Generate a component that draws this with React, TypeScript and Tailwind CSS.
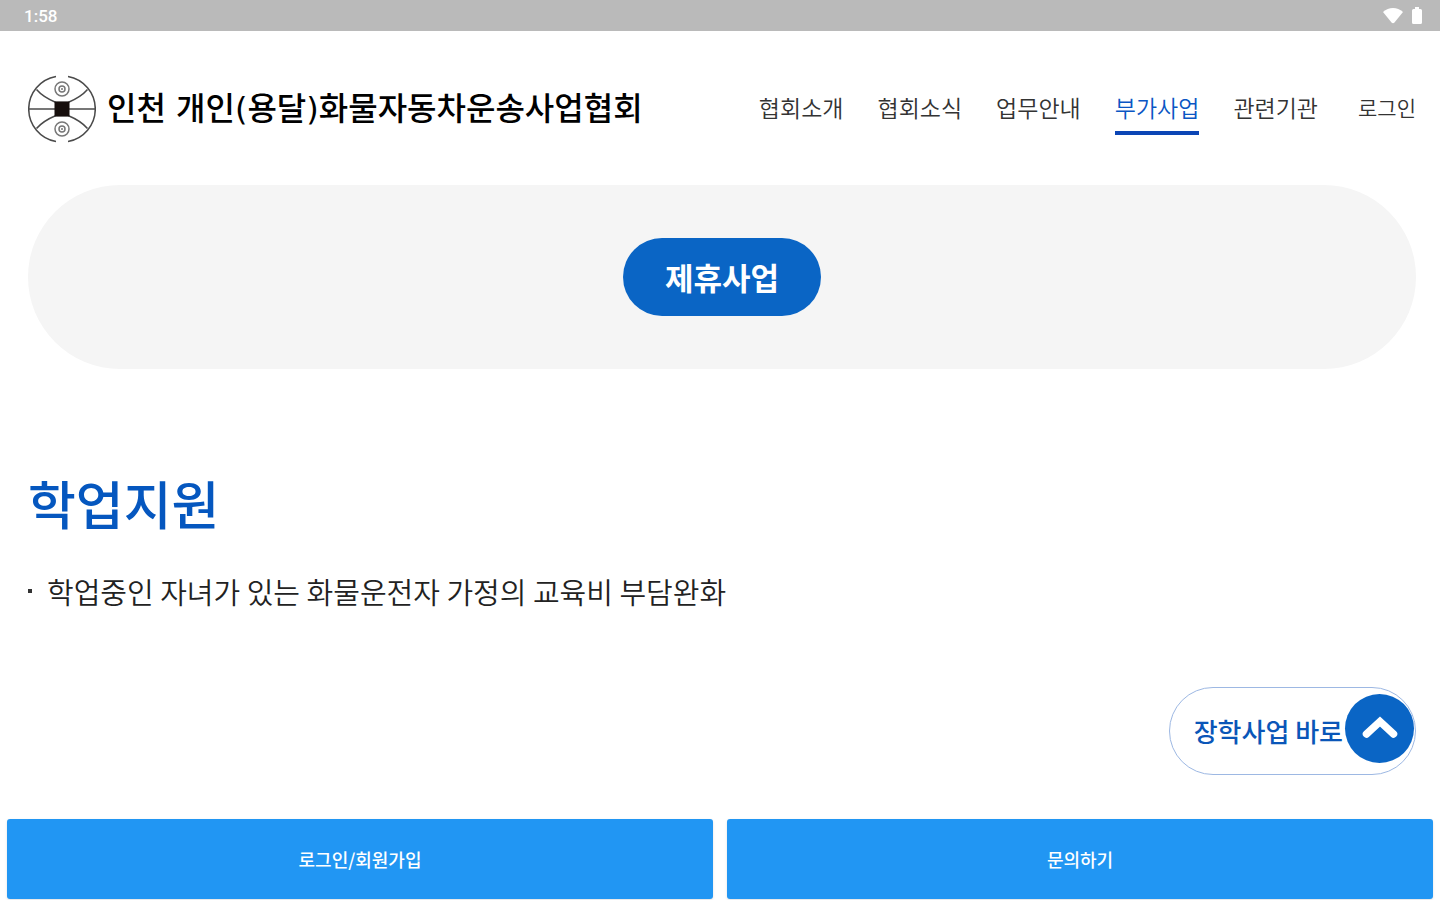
import React from "react";

const menu = [
  { label: "협회소개", active: false },
  { label: "협회소식", active: false },
  { label: "업무안내", active: false },
  { label: "부가사업", active: true },
  { label: "관련기관", active: false },
];

function StatusBar() {
  return (
    <div className="flex h-[31px] items-center justify-between bg-[#bababa] pl-6 pr-[18px] text-white">
      <span className="pt-px font-[Roboto,sans-serif] text-[17px] leading-5 font-medium">1:58</span>
      <div className="flex items-center gap-[9px]">
        <svg width="20" height="18" viewBox="0 0 20 18" fill="currentColor" aria-hidden="true">
          <path d="M0 5C3 2.500 6.300 1 10 1S17 2.500 20 5L11.500 15.500Q10 17 8.500 15.500Z" />
        </svg>
        <svg width="10" height="18" viewBox="0 0 10 18" fill="currentColor" aria-hidden="true">
          <path d="M3 0H7V2H8.500Q10 2 10 3.500V15.500Q10 17 8.500 17H1.500Q0 17 0 15.500V3.500Q0 2 1.500 2H3Z" />
        </svg>
      </div>
    </div>
  );
}

function Emblem() {
  return (
    <svg width="68" height="68" viewBox="0 0 68 68" fill="none" stroke="#4a4a4a" strokeWidth="1.5" aria-hidden="true">
      <path d="M28 1.500A33 33 0 0 0 28 66.500M40 1.500A33 33 0 0 1 40 66.500" />
      <path d="M1 34H67" />
      <path d="M8.500 14.500C15 22 22 25 28 27.500H40C46 25 53 22 59.500 14.500" />
      <path d="M8.500 53.500C15 46 22 43 28 40.500H40C46 43 53 46 59.500 53.500" />
      <g stroke="#777777">
        <circle cx="34" cy="14" r="7" />
        <circle cx="34" cy="14" r="3" />
        <circle cx="34" cy="54" r="7" />
        <circle cx="34" cy="54" r="3" />
      </g>
      <g fill="#777777" stroke="none">
        <circle cx="34" cy="14" r="1" />
        <circle cx="34" cy="54" r="1" />
      </g>
      <rect x="26.500" y="26.500" width="15" height="15" fill="#170f0d" stroke="none" />
    </svg>
  );
}

function Header() {
  return (
    <header className="flex items-center justify-between pt-11 pr-6 pl-7">
      <a href="#home" className="flex items-center gap-[11px]">
        <Emblem />
        <span className="font-['DejaVu_Sans','Noto_Sans_CJK_KR',sans-serif] text-[32px] leading-10 font-medium whitespace-nowrap text-black">
          인천 개인(용달)화물자동차운송사업협회
        </span>
      </a>
      <nav className="flex items-center gap-[34px] whitespace-nowrap">
        {menu.map((item) => (
          <a
            key={item.label}
            href="#menu"
            aria-current={item.active ? "page" : undefined}
            className={
              item.active
                ? "border-y-4 border-t-transparent border-b-[#0b45b5] pt-1 pb-2 text-[23px] leading-8 font-[350] text-[#0a56c4]"
                : "border-y-4 border-transparent pt-1 pb-2 text-[23px] leading-8 font-[350] text-[#333333]"
            }
          >
            {item.label}
          </a>
        ))}
        <a href="#login" className="pb-1 pl-[6px] text-[21px] leading-8 font-[350] text-[#333333]">
          로그인
        </a>
      </nav>
    </header>
  );
}

export default function App() {
  return (
    <div className="flex min-h-screen flex-col bg-white font-['Noto_Sans_CJK_KR',sans-serif]">
      <StatusBar />
      <Header />
      <main className="flex flex-col pt-[42px] pr-6 pl-7">
        <div className="flex justify-center rounded-full bg-[#f5f5f5] py-[53px]">
          <a
            href="#partners"
            className="rounded-full bg-[#0a65c5] px-[42px] py-4 text-[31px] leading-[46px] font-bold text-white"
          >
            제휴사업
          </a>
        </div>
        <h1 className="pt-24 text-[52px] leading-[76px] font-medium text-[#0557bf]">학업지원</h1>
        <ul className="pt-[30px]">
          <li className="flex items-center gap-[15px] text-[29px] leading-10 font-[350] text-[#222222]">
            <span className="size-1 bg-[#333333]" />
            학업중인 자녀가 있는 화물운전자 가정의 교육비 부담완화
          </li>
        </ul>
        <div className="relative mt-[76px] self-end">
          <a
            href="#scholarship"
            className="block rounded-full border border-[#9db8e3] py-6 pr-[72px] pl-6 text-[26px] leading-[38px] font-medium whitespace-nowrap text-[#0a56b8]"
          >
            장학사업 바로
          </a>
          <button
            type="button"
            aria-label="맨 위로"
            className="absolute top-[7px] right-[2px] flex size-[69px] items-center justify-center rounded-full bg-[#0a65c5]"
          >
            <svg width="38" height="26" viewBox="0 0 38 26" fill="none" stroke="white" strokeWidth="7.5" strokeLinecap="round" aria-hidden="true">
              <path d="M5.500 18L19 5.500L32.500 18" />
            </svg>
          </button>
        </div>
      </main>
      <div className="mt-auto grid grid-cols-2 gap-[14px] px-[7px] pt-8 pb-px text-[18px] font-medium text-white">
        <button type="button" className="h-20 rounded-[3px] bg-[#2196f3] shadow-sm">
          로그인/회원가입
        </button>
        <button type="button" className="h-20 rounded-[3px] bg-[#2196f3] shadow-sm">
          문의하기
        </button>
      </div>
    </div>
  );
}
